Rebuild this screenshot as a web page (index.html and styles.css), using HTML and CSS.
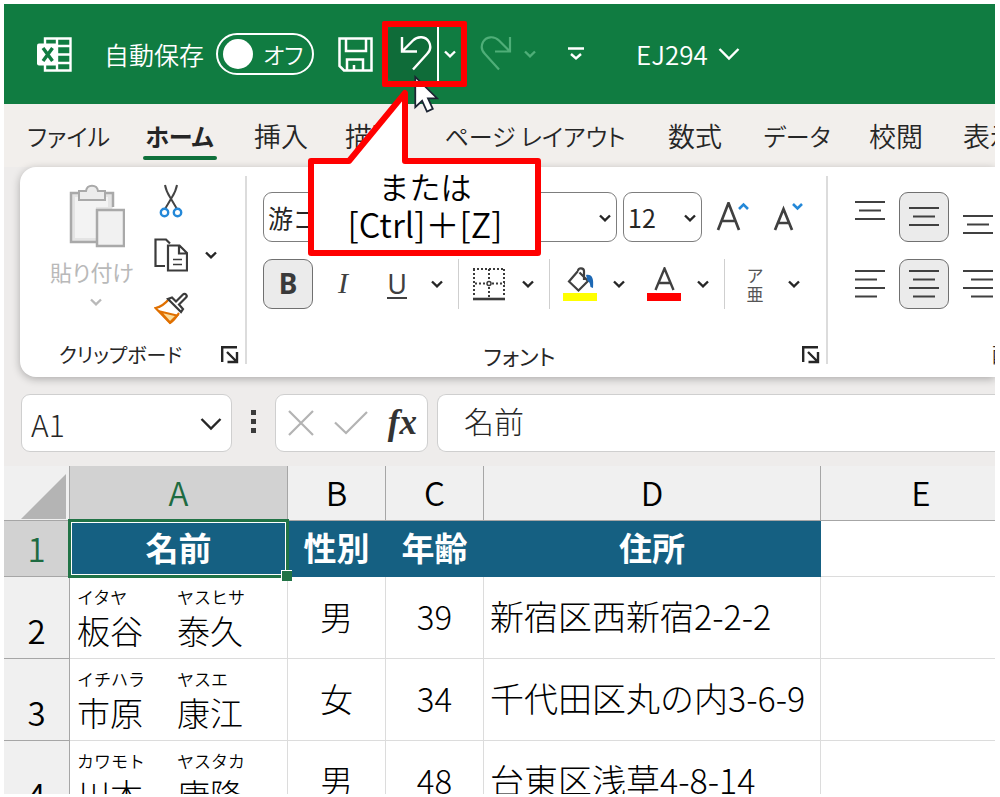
FILE: index.html
```html
<!DOCTYPE html>
<html lang="ja">
<head>
<meta charset="utf-8">
<title>EJ294</title>
<link rel="stylesheet" href="styles.css">
</head>
<body>
<svg class="defs" aria-hidden="true">
  <symbol id="chev" viewBox="0 0 12 8"><path d="M1 1.5 6 6.3 11 1.5" fill="none" stroke="currentColor" stroke-width="2.4"/></symbol>
  <symbol id="chev-big" viewBox="0 0 22 14"><path d="M1.5 2 11 11.5 20.5 2" fill="none" stroke="currentColor" stroke-width="2.4"/></symbol>
  <symbol id="launch" viewBox="0 0 18 18"><path d="M1.2 16V1.2H16M6 6l9 9M16 6v10H6.500" fill="none" stroke="currentColor" stroke-width="2.4"/></symbol>
</svg>
<div class="window">
  <header class="titlebar">
    <svg class="logo" viewBox="0 0 35 35" aria-label="Excel">
      <path d="M8 1.500h25.500v32H8z" fill="none" stroke="#fff" stroke-width="2.400"/>
      <path d="M20 1.500v32M8 9h25.500M20 17.500h13.500M8 26h25.500" stroke="#fff" stroke-width="2.400"/>
      <rect x="0" y="6.500" width="21" height="22" rx="2" fill="#fff"/>
      <path d="M6 11l9.500 13M15.500 11 6 24" stroke="#107c41" stroke-width="3.400"/>
    </svg>
    <label class="autosave" for="auto">自動保存</label>
    <label class="switch"><input type="checkbox" id="auto"><span>オフ</span></label>
    <button class="bar-btn save" aria-label="保存">
      <svg width="35" height="35" viewBox="0 0 35 35" fill="none" stroke="#fff" stroke-width="2.500"><path d="M1.500 1.500h32v32H6l-4.500-4.500zM8 1.500V14h20V1.500M9 33.500V22.500h16v11M16 33.500V28"/></svg>
    </button>
    <div class="undo">
      <button class="undo-main" aria-label="元に戻す">
        <svg width="32" height="36" viewBox="0 0 32 36" fill="none" stroke="#fff" stroke-width="2.400"><path d="M2 1v14.500h15M2.500 15 13 4.500C18-.5 26 .5 29 6c2.500 5 1 9-2 12L13 33.500"/></svg>
      </button>
      <button class="undo-more" aria-label="元に戻す一覧"><svg class="chev"><use href="#chev"/></svg></button>
      <svg class="cursor" viewBox="0 0 26 40"><path d="M2 2v31l7-6.500 5 11 6-2.800-5-10.700h9.500z" fill="#fff" stroke="#1c2433" stroke-width="1.800"/></svg>
    </div>
    <button class="bar-btn redo" aria-label="やり直し">
      <svg width="32" height="36" viewBox="0 0 32 36" fill="none" stroke="currentColor" stroke-width="2.200"><path d="M30 1v14.500H15M29.500 15 19 4.500C14-.5 6 .5 3 6c-2.500 5-1 9 2 12l14 15.500"/></svg>
      <svg class="chev"><use href="#chev"/></svg>
    </button>
    <button class="bar-btn custom" aria-label="クイック アクセス ツール バーのユーザー設定">
      <svg width="16" height="14" viewBox="0 0 16 14" fill="none" stroke="#fff" stroke-width="2.400"><path d="M0 1.500h16M3 7l5 4.500L13 7"/></svg>
    </button>
    <button class="bar-btn doc">EJ294 <svg class="chev-big"><use href="#chev-big"/></svg></button>
  </header>

  <nav class="tabs">
    <a href="#" class="tab t-file">ファイル</a>
    <a href="#" class="tab t-home active">ホーム</a>
    <a href="#" class="tab t-insert">挿入</a>
    <a href="#" class="tab t-draw">描画</a>
    <a href="#" class="tab t-page">ページ レイアウト</a>
    <a href="#" class="tab t-formula">数式</a>
    <a href="#" class="tab t-data">データ</a>
    <a href="#" class="tab t-review">校閲</a>
    <a href="#" class="tab t-view">表示</a>
  </nav>

  <section class="ribbon">
    <div class="group clipboard">
      <div class="group-body">
        <button class="paste" disabled>
          <svg width="58" height="64" viewBox="0 0 58 64" fill="#ececec" stroke="#a9a9a9" stroke-width="2">
            <path d="M29 58H4V9h42v14" fill="#e4e4e4" stroke-width="2.500"/><path d="M8 54V13h33v10H29v31z" fill="#f3f3f3" stroke="none"/>
            <path d="M12 16V7h7c1-7 11-7 12 0h7v9z"/><path d="M30 26h27v36H30z" stroke-width="2.500" fill="#f1f1f1"/>
          </svg>
          <span>貼り付け</span>
          <svg class="chev"><use href="#chev"/></svg>
        </button>
        <div class="clip-tools">
          <button class="cut" aria-label="切り取り"><svg width="34" height="34" viewBox="0 0 34 34" fill="none"><path d="M11 1c1 6 3 9 5.500 13L23 25M23 1c-1 6-3 9-5.500 13L11 25" stroke="#444" stroke-width="2"/><circle cx="10.500" cy="28.500" r="3.700" stroke="#2488d8" stroke-width="2.400"/><circle cx="23.500" cy="28.500" r="3.700" stroke="#2488d8" stroke-width="2.400"/></svg></button>
          <div class="copy-row">
            <button aria-label="コピー"><svg width="34" height="34" viewBox="0 0 34 34" fill="none" stroke="#3b3b3b" stroke-width="2.200"><path d="M11 28H1.500V1.500H12l4 4"/><path d="M14 7.500h11.500L33 15v17.500H14zM25 7.500V15.500h8"/><path d="M19 21.500h9M19 26.500h9" stroke-width="1.600"/></svg></button>
            <button aria-label="コピーのオプション"><svg class="chev"><use href="#chev"/></svg></button>
          </div>
          <button aria-label="書式のコピー"><svg width="34" height="34" viewBox="0 0 34 34" fill="none" stroke-width="2.200"><path d="M15 7C11 12 6 15 1.500 16L16 31c4-2 6-6 9-10" stroke="#e07000" fill="#fff"/><path d="M6 19.500l17 4-7 7z" fill="#fbdc9a" stroke="#e07000"/><path d="M14 7l13 13 2-3-4-4.500 7-7c2-2-1-5-3-3l-7 7-4-4z" stroke="#3b3b3b" fill="#fff"/></svg></button>
        </div>
      </div>
      <div class="group-foot"><span>クリップボード</span><button class="launcher" aria-label="クリップボードの設定"><svg width="18" height="18"><use href="#launch"/></svg></button></div>
    </div>

    <div class="group font">
      <div class="group-body font-rows">
        <div class="font-row">
          <span class="drop drop-font"><select aria-label="フォント"><option>游ゴシック</option></select><svg class="chev"><use href="#chev"/></svg></span>
          <span class="drop drop-size"><select aria-label="フォント サイズ"><option>12</option></select><svg class="chev"><use href="#chev"/></svg></span>
          <button class="tool grow" aria-label="フォント サイズの拡大"><svg width="34" height="30" viewBox="0 0 34 30" fill="none"><path d="M2 28 12.500 1 23 28M5.500 19h14" stroke="#404040" stroke-width="2.700"/><path d="M23 7l4.500-4.500L32 7" stroke="#2488d8" stroke-width="2.600"/></svg></button>
          <button class="tool" aria-label="フォント サイズの縮小"><svg width="34" height="30" viewBox="0 0 34 30" fill="none"><path d="M2 28 10.500 7 19 28M5 21h11" stroke="#404040" stroke-width="2.700"/><path d="M20 2 24.500 6.500 29 2" stroke="#2488d8" stroke-width="2.600"/></svg></button>
        </div>
        <div class="font-row">
          <button class="square on bold">B</button>
          <button class="tool italic">I</button>
          <button class="tool under"><span>U</span></button>
          <button class="more" aria-label="下線の種類"><svg class="chev"><use href="#chev"/></svg></button>
          <i class="sep"></i>
          <button class="tool" aria-label="罫線"><svg width="32" height="34" viewBox="0 0 32 34" fill="none" stroke="#3b3b3b" stroke-width="2"><path d="M0 2h32M1 2v28M31 2v28M16 2v11M16 20v10M2 16.500h11M19 16.500h13" stroke-dasharray="2 2"/><circle cx="16" cy="16.500" r="2" stroke-width="1.500"/><path d="M0 32h32" stroke-width="2.600"/></svg></button>
          <button class="more" aria-label="罫線の種類"><svg class="chev"><use href="#chev"/></svg></button>
          <i class="sep"></i>
          <button class="tool" aria-label="塗りつぶしの色"><svg width="34" height="34" viewBox="0 0 34 34" fill="none"><path d="M15 4 6 14.500 15.500 23.500 25 14 16.500 5.500M15 4c0-4 6-3 6 0v9" stroke="#404040" stroke-width="2.200"/><path d="M23 8c6-1 8 3 7 13l-2.500-1c-.5-4-1-5-3-6z" fill="#1d68b4"/><path d="M0 26h34v8H0z" fill="#ff0"/></svg></button>
          <button class="more" aria-label="塗りつぶしの一覧"><svg class="chev"><use href="#chev"/></svg></button>
          <button class="tool color" aria-label="フォントの色"><svg width="34" height="34" viewBox="0 0 34 34" fill="none"><path d="M8.500 23 17.500 1.500 26.500 23M11.500 16h12" stroke="#404040" stroke-width="2.400"/><path d="M0 26h34v8H0z" fill="#f00"/></svg></button>
          <button class="more" aria-label="フォントの色の一覧"><svg class="chev"><use href="#chev"/></svg></button>
          <i class="sep"></i>
          <button class="tool ruby-btn"><span>ア</span><span>亜</span></button>
          <button class="more" aria-label="ふりがなのオプション"><svg class="chev"><use href="#chev"/></svg></button>
        </div>
      </div>
      <div class="group-foot"><span>フォント</span><button class="launcher" aria-label="フォントの設定"><svg width="18" height="18"><use href="#launch"/></svg></button></div>
    </div>

    <div class="group align">
      <div class="group-body align-grid">
        <button class="square" aria-label="上揃え"><svg viewBox="0 0 30 34"><path d="M0 2h30M4 10.500h22M0 19h30"/></svg></button>
        <button class="square on" aria-label="上下中央揃え"><svg viewBox="0 0 30 34"><path d="M0 8h30M4 16.500h22M0 25h30"/></svg></button>
        <button class="square" aria-label="下揃え"><svg viewBox="0 0 30 34"><path d="M0 16h30M4 24.500h22M0 33h30"/></svg></button>
        <button class="square" aria-label="左揃え"><svg viewBox="0 0 30 34"><path d="M0 4h30M0 12.500h22M0 21h30M0 29.500h22"/></svg></button>
        <button class="square on" aria-label="中央揃え"><svg viewBox="0 0 30 34"><path d="M0 4h30M4 12.500h22M0 21h30M4 29.500h22"/></svg></button>
        <button class="square" aria-label="右揃え"><svg viewBox="0 0 30 34"><path d="M0 4h30M8 12.500h22M0 21h30M8 29.500h22"/></svg></button>
      </div>
      <div class="group-foot"><span>配置</span></div>
    </div>
  </section>

  <section class="formula-bar">
    <div class="box name-box"><input type="text" value="A1" aria-label="名前ボックス"><button aria-label="名前の一覧"><svg class="chev-big"><use href="#chev-big"/></svg></button></div>
    <div class="dots"><i></i><i></i><i></i></div>
    <div class="box fx-box">
      <button aria-label="キャンセル"><svg width="26" height="26" viewBox="0 0 26 26" fill="none" stroke="#b3b3b3" stroke-width="2.200"><path d="M1 1l24 24M25 1 1 25"/></svg></button>
      <button aria-label="入力"><svg width="34" height="24" viewBox="0 0 34 24" fill="none" stroke="#b3b3b3" stroke-width="2.200"><path d="M1 11.500 12 22 33 1"/></svg></button>
      <button class="fx">fx</button>
    </div>
    <input class="box formula" type="text" value="名前" aria-label="数式バー">
  </section>

  <main class="sheet">
    <table>
      <colgroup><col class="c-num"><col class="c-a"><col class="c-b"><col class="c-c"><col class="c-d"><col class="c-e"></colgroup>
      <thead>
        <tr><th class="corner"><svg width="45" height="45" viewBox="0 0 45 45"><path d="M45 0v45H0z" fill="#b4b4b4"/></svg></th><th class="sel">A</th><th>B</th><th>C</th><th>D</th><th>E</th></tr>
      </thead>
      <tbody>
        <tr class="head"><th class="sel">1</th><td class="current">名前</td><td>性別</td><td>年齢</td><td>住所</td><td class="empty"></td></tr>
        <tr><th>2</th><td><div class="person"><span class="name"><small>イタヤ</small>板谷</span><span class="name"><small>ヤスヒサ</small>泰久</span></div></td><td class="mid">男</td><td class="mid">39</td><td class="addr">新宿区西新宿2-2-2</td><td></td></tr>
        <tr><th>3</th><td><div class="person"><span class="name"><small>イチハラ</small>市原</span><span class="name"><small>ヤスエ</small>康江</span></div></td><td class="mid">女</td><td class="mid">34</td><td class="addr">千代田区丸の内3-6-9</td><td></td></tr>
        <tr><th>4</th><td><div class="person"><span class="name"><small>カワモト</small>川本</span><span class="name"><small>ヤスタカ</small>康隆</span></div></td><td class="mid">男</td><td class="mid">48</td><td class="addr">台東区浅草4-8-14</td><td></td></tr>
      </tbody>
    </table>
  </main>

  <aside class="callout">
    <svg viewBox="0 0 236 174"><path d="M4 76h38L98 8v68h133v92H4z" fill="#fff" stroke="#f00" stroke-width="6" stroke-linejoin="round"/></svg>
    <p><span>または</span><span class="keys">[Ctrl]＋[Z]</span></p>
  </aside>
</div>
</body>
</html>
```
FILE: styles.css
```css
* { box-sizing: border-box; }

body {
  margin: 0;
  padding: 4px 5px 3px 4px;
  background: #fff;
  color: #262626;
  font-family: "Noto Sans CJK JP", sans-serif;
}

button, input, select {
  font: inherit;
  color: inherit;
  border: 0;
  background: none;
  padding: 0;
  margin: 0;
}

button {
  display: flex;
  align-items: center;
  justify-content: center;
}

svg { display: block; flex: none; }
.defs { position: absolute; width: 0; height: 0; }
.chev { width: 12px; height: 8px; }
.chev-big { width: 22px; height: 14px; }

.window {
  position: relative;
  height: calc(100vh - 7px);
  overflow: hidden;
  background: #eeeceb;
}

/* title bar */
.titlebar {
  display: flex;
  align-items: center;
  height: 100px;
  padding-left: 33px;
  background: #107c41;
  color: #fff;
  font-size: 25px;
  font-weight: 350;
  line-height: 36px;
}
.logo { width: 35px; height: 35px; }
.autosave { margin-left: 32px; white-space: nowrap; }
.switch {
  display: flex;
  align-items: center;
  gap: 10px;
  width: 98px;
  height: 42px;
  margin-left: 12px;
  padding-left: 5px;
  border: 2px solid #fff;
  border-radius: 21px;
  font-feature-settings: "palt";
  white-space: nowrap;
  font-size: 23px;
}
.switch input {
  appearance: none;
  flex: none;
  width: 30px;
  height: 30px;
  border-radius: 50%;
  background: #fff;
}
.save { margin-left: 24px; }
.undo {
  position: relative;
  z-index: 1;
  display: flex;
  width: 73px;
  height: 54px;
  margin-left: 15px;
}
.undo-main { width: 49px; background: #0f6c39; border-radius: 5px 0 0 5px; padding-left: 6px; }
.undo-more { flex: 1; border-left: 2px solid #fff; }
.undo::after {
  content: "";
  position: absolute;
  inset: -6px;
  border: 6px solid #f00;
  border-radius: 2px;
}
.cursor { position: absolute; left: 25px; top: 48px; width: 26px; height: 39px; }
.redo { margin-left: 19px; gap: 12px; color: #4fae78; }
.custom { margin-left: 32px; }
.doc { margin-left: 52px; gap: 10px; font-size: 26px; }

/* tabs */
.tabs {
  display: flex;
  align-items: flex-start;
  height: 63px;
  padding: 14px 0 0 16px;
  background: #f2efec;
  overflow: hidden;
}
.tab {
  flex: none;
  display: flex;
  flex-direction: column;
  align-items: center;
  color: inherit;
  text-decoration: none;
  white-space: nowrap;
  font-size: 24px;
  font-weight: 350;
  line-height: 36px;
  font-feature-settings: "palt";
}
.t-file { width: 97px; }
.t-home { width: 125px; }
.t-insert { width: 78px; font-size: 27px; }
.t-draw { width: 104px; font-size: 27px; }
.t-page { width: 222px; }
.t-formula { width: 98px; font-size: 27px; }
.t-data { width: 106px; }
.t-review { width: 92px; font-size: 27px; }
.t-view { width: 96px; font-size: 27px; }
.active { font-weight: 700; }
.active::after {
  content: "";
  width: 74px;
  height: 4px;
  margin-top: 2px;
  border-radius: 2px;
  background: #0f703b;
}

/* ribbon */
.ribbon {
  display: flex;
  height: 210px;
  margin-left: 16px;
  padding: 9px 0 13px;
  border-radius: 16px 0 0 16px;
  background: #fff;
  box-shadow: 0 2px 8px rgba(0, 0, 0, 0.28);
  overflow: hidden;
}
.group {
  flex: none;
  display: flex;
  flex-direction: column;
  justify-content: space-between;
  border-right: 2px solid #dcdcdc;
}
.group-foot {
  display: flex;
  align-items: center;
  height: 32px;
  margin-bottom: -7px;
  padding-right: 6px;
  font-size: 20px;
  line-height: 30px;
  font-feature-settings: "palt";
}
.group-foot span { flex: 1; text-align: center; white-space: nowrap; }

.clipboard { width: 227px; }
.clipboard .group-body { display: flex; padding: 8px 0 0 26px; }
.clipboard .group-foot { padding-left: 20px; }
.clipboard .group-foot span { margin-right: 20px; }
.paste {
  flex-direction: column;
  justify-content: flex-start;
  width: 100px;
  color: #b9b9b9;
  font-size: 22px;
  line-height: 34px;
  font-feature-settings: "palt";
  white-space: nowrap;
}
.paste > span { margin: 6px 8px 10px 0; }
.clip-tools {
  display: flex;
  flex-direction: column;
  align-items: flex-start;
  gap: 20px;
  padding-left: 8px;
}
.copy-row { display: flex; gap: 17px; }

.font { width: 581px; }
.font .group-foot span { padding-right: 10px; font-size: 22px; }
.font-rows {
  display: flex;
  flex-direction: column;
  gap: 17px;
  padding: 16px 0 0 16px;
}
.font-row { display: flex; align-items: center; height: 50px; }
.drop { position: relative; height: 50px; }
.drop select {
  appearance: none;
  width: 100%;
  height: 100%;
  padding-left: 4px;
  border: 1px solid #7d7d7d;
  border-radius: 9px;
  font-size: 25px;
}
.drop .chev { position: absolute; right: 6px; top: 22px; pointer-events: none; }
.drop-font { width: 354px; }
.drop-size { width: 79px; margin-left: 6px; }
.grow { margin-left: 5px; margin-right: 5px; }
.tool { width: 52px; height: 50px; }
.more { width: 26px; height: 50px; }
.square {
  width: 50px;
  height: 50px;
  border-radius: 9px;
}
.on { border: 1px solid #707070; background: #ebebeb; }
.square svg { width: 30px; height: 34px; fill: none; stroke: #404040; stroke-width: 2; }
.bold { padding-bottom: 3px; font: 700 28px/30px "Noto Sans", sans-serif; color: #3a3a3a; }
.italic { margin-left: 4px; padding-bottom: 3px; font: italic 30px/30px "Liberation Serif", serif; color: #404040; }
.under { margin-left: 2px; font: 27px/27px "Noto Sans", sans-serif; color: #404040; }
.under + .more { margin-left: 1px; }
.under span { border-bottom: 2px solid #404040; }
.color { margin-left: 6px; }
.sep { width: 1px; height: 50px; margin: 0 4px 0 8px; background: #cfcfcf; }
.ruby-btn { flex-direction: column; font-size: 17px; line-height: 19px; color: #555; }

.align { width: 376px; }
.align-grid {
  display: grid;
  grid-template-columns: repeat(3, 50px);
  gap: 17px 4px;
  padding: 16px 0 0 17px;
}

/* formula bar */
.formula-bar {
  display: flex;
  align-items: center;
  height: 89px;
  padding: 0 0 0 17px;
  font-size: 30px;
  font-weight: 300;
}
.box {
  display: flex;
  align-items: center;
  height: 58px;
  margin-top: 2px;
  border: 1px solid #cfcfcf;
  border-radius: 9px;
  background: #fff;
}
.name-box { width: 211px; padding: 2px 9px 0 9px; }
.name-box input { flex: 1; min-width: 0; }
.dots { display: flex; flex-direction: column; gap: 4px; margin: 0 19px 0 19px; }
.dots i { width: 5px; height: 5px; background: #3b3b3b; }
.fx-box { width: 153px; justify-content: space-between; padding: 0 10px 0 12px; }
.fx { font: italic 700 35px/40px "Liberation Serif", serif; color: #333; }
.formula {
  flex: 1;
  min-width: 0;
  margin-left: 9px;
  padding: 0 0 6px 26px;
  border-right: 0;
  border-radius: 9px 0 0 9px;
}

/* sheet */
.sheet { background: #fff; }
table {
  table-layout: fixed;
  width: 1018px;
  border-collapse: separate;
  border-spacing: 0;
  color: #000;
  font-size: 33px;
  font-weight: 300;
  line-height: 40px;
}
.c-num { width: 66px; }
.c-a { width: 218px; }
.c-b, .c-c { width: 98px; }
.c-d { width: 337px; }
.c-e { width: 201px; }
th, td {
  height: 82px;
  padding: 0 0 2px;
  border-right: 1px solid #dcdcdc;
  border-bottom: 1px solid #dcdcdc;
}
td { padding-left: 6px; white-space: nowrap; }
th { background: #f0f0f0; font-weight: 350; border-color: #a6a6a6; }
thead th { height: 55px; }
tbody th { vertical-align: bottom; padding-bottom: 8px; }
thead .corner { padding: 6px 0 0 17px; }
th.sel { background: #d2d2d2; color: #1e6b41; }
.mid { padding: 0 0 4px; text-align: center; }
.addr { padding-bottom: 4px; font-size: 34px; }
.head th, .head td { height: 56px; }
.head td {
  padding: 0 0 4px;
  background: #156082;
  border-color: #156082;
  color: #fff;
  font-weight: 700;
  text-align: center;
}
.head .empty { background: #fff; border-color: #dcdcdc; }
.current { position: relative; }
.current::before {
  content: "";
  position: absolute;
  inset: -2px;
  border: 3px solid #217346;
  box-shadow: inset 0 0 0 1px #fff;
}
.current::after {
  content: "";
  position: absolute;
  right: -5px;
  bottom: -5px;
  width: 10px;
  height: 10px;
  border: 1px solid #fff;
  border-right: 0;
  border-bottom: 0;
  background: #217346;
}
.person { display: flex; gap: 34px; padding-left: 1px; }
.name { display: flex; flex-direction: column; width: 66px; }
.name small { font-size: 17px; font-weight: 350; line-height: 26px; }

/* callout */
.callout { position: absolute; z-index: 2; left: 303px; top: 81px; width: 236px; height: 174px; }
.callout svg { width: 236px; height: 174px; }
.callout p {
  position: absolute;
  inset: 82px 0 0 0;
  display: flex;
  flex-direction: column;
  align-items: center;
  margin: 0;
  color: #000;
  font-size: 31px;
  font-weight: 350;
  line-height: 38px;
}
.keys { font-size: 34px; white-space: nowrap; }
```
